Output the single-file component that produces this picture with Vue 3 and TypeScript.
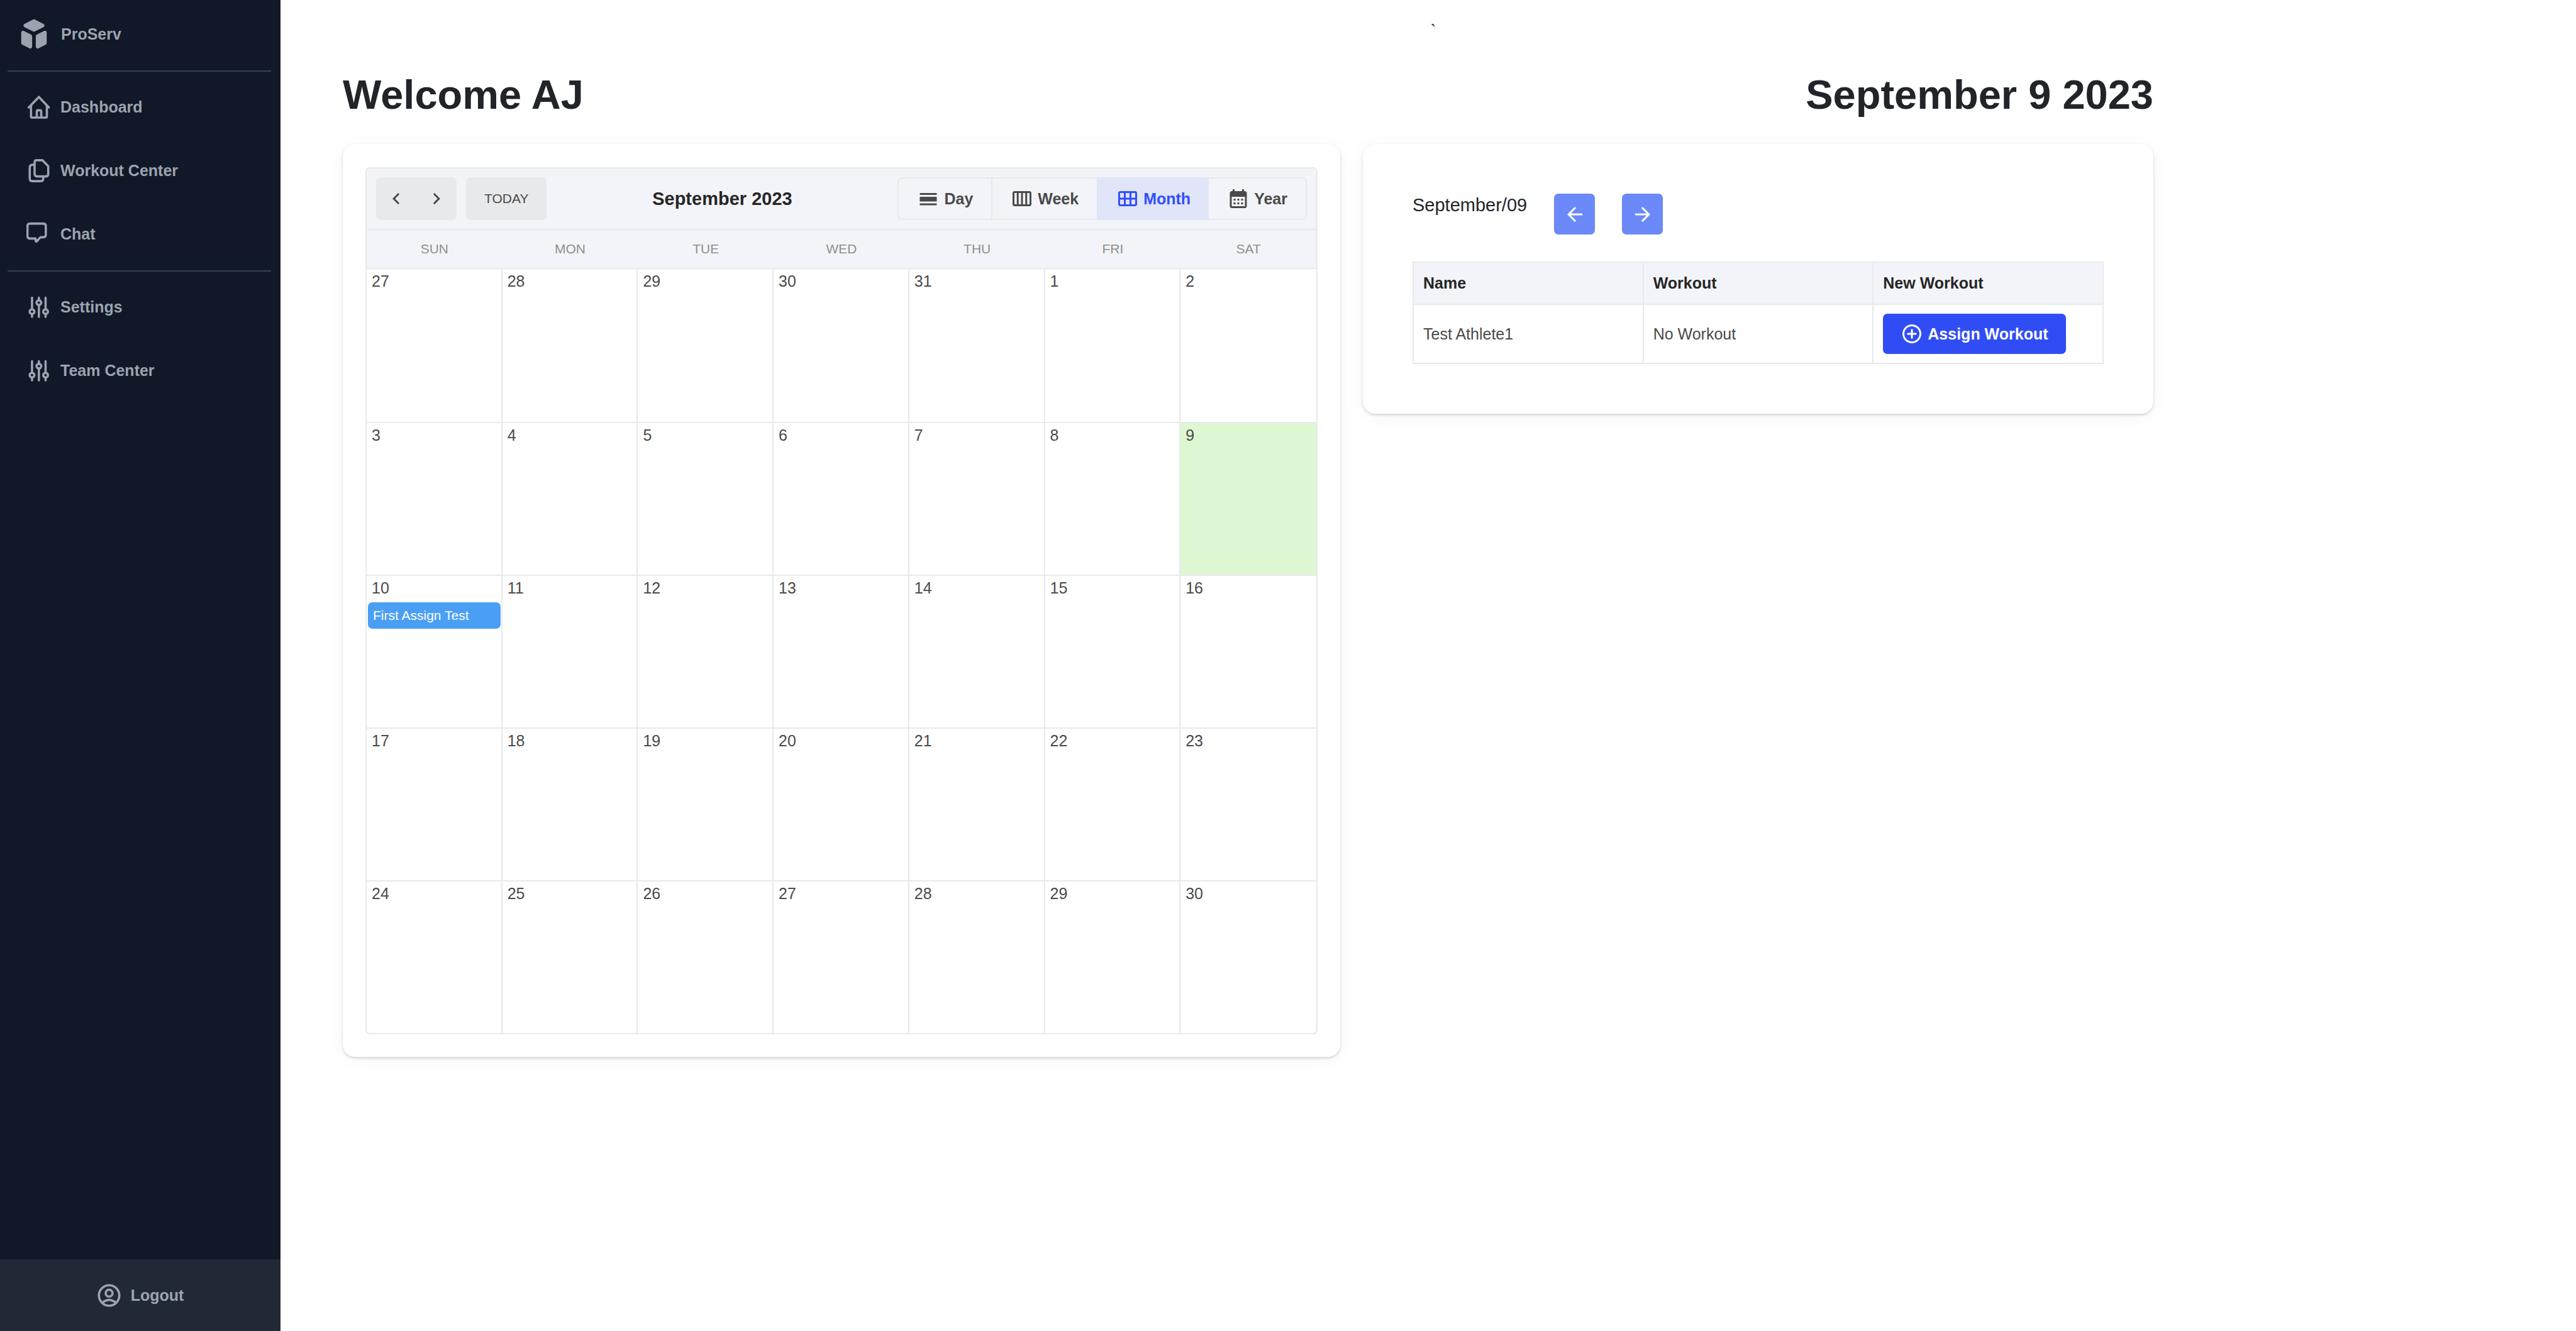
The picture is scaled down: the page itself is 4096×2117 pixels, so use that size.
<script setup lang="ts">
import { ref } from 'vue'

interface NavItem {
  label: string
  icon: 'home' | 'copy' | 'chat' | 'sliders'
}

interface ViewMode {
  label: string
  path: string
}

interface CalendarDay {
  day: number
  today?: boolean
  event?: string
}

const navGroups: NavItem[][] = [
  [
    { label: 'Dashboard', icon: 'home' },
    { label: 'Workout Center', icon: 'copy' },
    { label: 'Chat', icon: 'chat' },
  ],
  [
    { label: 'Settings', icon: 'sliders' },
    { label: 'Team Center', icon: 'sliders' },
  ],
]

const viewModes: ViewMode[] = [
  { label: 'Day', path: 'M3 17h18v2H3v-2zm0-7h18v5H3v-5zm0-4h18v2H3V6z' },
  {
    label: 'Week',
    path: 'M20 4H4c-1.1 0-2 .9-2 2v12c0 1.1.9 2 2 2h16c1.1 0 2-.9 2-2V6c0-1.1-.9-2-2-2zm-7 2h2.5v12H13V6zm-2 12H8.5V6H11v12zM4 6h2.5v12H4V6zm16 12h-2.5V6H20v12z',
  },
  {
    label: 'Month',
    path: 'M20 4H4c-1.1 0-2 .9-2 2v12c0 1.1.9 2 2 2h16c1.1 0 2-.9 2-2V6c0-1.1-.9-2-2-2zM8 11H4V6h4v5zm6 0h-4V6h4v5zm6 0h-4V6h4v5zM8 18H4v-5h4v5zm6 0h-4v-5h4v5zm6 0h-4v-5h4v5z',
  },
  {
    label: 'Year',
    path: 'M19 4h-1V2h-2v2H8V2H6v2H5c-1.11 0-1.99.9-1.99 2L3 20c0 1.1.89 2 2 2h14c1.1 0 2-.9 2-2V6c0-1.1-.9-2-2-2zm0 16H5V10h14v10zM9 14H7v-2h2v2zm4 0h-2v-2h2v2zm4 0h-2v-2h2v2zm-8 4H7v-2h2v2zm4 0h-2v-2h2v2zm4 0h-2v-2h2v2z',
  },
]

const activeView = ref('Month')
const weekdays = ['SUN', 'MON', 'TUE', 'WED', 'THU', 'FRI', 'SAT']

// Five weeks starting on Sunday, August 27
const weeks: CalendarDay[][] = Array.from({ length: 5 }, (_, w) =>
  Array.from({ length: 7 }, (_, d) => {
    const offset = w * 7 + d
    const day = offset < 5 ? 27 + offset : offset - 4
    return {
      day,
      today: day === 9,
      event: day === 10 ? 'First Assign Test' : undefined,
    }
  }),
)

const athletes = [{ name: 'Test Athlete1', workout: 'No Workout' }]
</script>

<template>
  <div class="app">
    <aside class="sidebar">
      <a class="brand" href="#">
        <svg class="brand-icon" viewBox="0 0 20 20" fill="currentColor" aria-hidden="true">
          <path d="M11 17a1 1 0 001.447.894l4-2A1 1 0 0017 15V9.236a1 1 0 00-1.447-.894l-4 2a1 1 0 00-.553.894V17zM15.211 6.276a1 1 0 000-1.788l-4.764-2.382a1 1 0 00-.894 0L4.789 4.488a1 1 0 000 1.788l4.764 2.382a1 1 0 00.894 0l4.764-2.382zM4.447 8.342A1 1 0 003 9.236V15a1 1 0 00.553.894l4 2A1 1 0 009 17v-5.764a1 1 0 00-.553-.894l-4-2z" />
        </svg>
        <span>ProServ</span>
      </a>
      <nav>
        <ul v-for="(group, g) in navGroups" :key="g" class="nav-group">
          <li v-for="item in group" :key="item.label">
            <a class="nav-link" href="#">
              <svg class="nav-icon" viewBox="0 0 48 48" fill="none" stroke="currentColor" stroke-width="4.4" stroke-linecap="round" stroke-linejoin="round" aria-hidden="true">
                <template v-if="item.icon === 'home'">
                  <path d="M4.5 24.5L24.4 4 44 24.5" />
                  <path d="M9 21v21.5q0 1.8 1.8 1.8h27.4q1.8 0 1.8-1.8V21" />
                  <path d="M20.3 43V32.5q0-2.5 2.5-2.5h3.7q2.5 0 2.5 2.5V43" />
                </template>
                <template v-else-if="item.icon === 'copy'">
                  <path d="M20 3.5h10.5q1 0 1.7.7l9.8 10.3q.7.7.7 1.7V30q0 5.2-5 5.2H21q-5 0-5-5V7.5q0-4 4-4z" />
                  <path d="M14 12.5h-2.5q-5 0-5 5v21.5q0 5.5 5 5.5h16.5q5 0 5-5.5v-3" />
                </template>
                <template v-else-if="item.icon === 'chat'">
                  <path d="M7 3.2h26q5 0 5 5V25q0 5-5 5h-5.5l-7.5 8.2q-1.7.6-2-1.2v-4.5H7q-5 0-5-5V8.2q0-5 5-5z" />
                </template>
                <template v-else>
                  <path d="M11 5.5v22.5M11 37.5v5.5M24.4 5.5v5M24.4 20v23M37.5 5.5v22.5M37.5 37.5v5.5" />
                  <circle cx="11" cy="32.8" r="4.6" />
                  <circle cx="24.4" cy="15.2" r="4.6" />
                  <circle cx="37.5" cy="32.8" r="4.6" />
                </template>
              </svg>
              <span>{{ item.label }}</span>
            </a>
          </li>
        </ul>
      </nav>
      <a class="logout" href="#">
        <svg class="nav-icon" viewBox="0 0 48 48" fill="none" stroke="currentColor" stroke-width="4.4" aria-hidden="true">
          <circle cx="24" cy="24" r="20" />
          <circle cx="24" cy="19.5" r="6.7" />
          <path d="M10.5 38Q24 27.5 37.5 38" />
        </svg>
        <span>Logout</span>
      </a>
    </aside>

    <main class="main">
      <div class="notice">`</div>
      <div class="content">
        <header class="page-head">
          <h1>Welcome AJ</h1>
          <h1>September 9 2023</h1>
        </header>

        <div class="columns">
          <section class="card calendar-card">
            <div class="calendar">
              <div class="toolbar">
                <div class="toolbar-left">
                  <div class="pager">
                    <button type="button" aria-label="Previous month">
                      <svg class="icon" viewBox="0 0 24 24" fill="currentColor"><path d="M15.41 7.41L14 6l-6 6 6 6 1.41-1.41L10.83 12z" /></svg>
                    </button>
                    <button type="button" aria-label="Next month">
                      <svg class="icon" viewBox="0 0 24 24" fill="currentColor"><path d="M10 6L8.59 7.41 13.17 12l-4.58 4.59L10 18l6-6z" /></svg>
                    </button>
                  </div>
                  <button type="button" class="today-button">TODAY</button>
                </div>
                <h2>September 2023</h2>
                <div class="views">
                  <button
                    v-for="mode in viewModes"
                    :key="mode.label"
                    type="button"
                    :class="{ active: mode.label === activeView }"
                    @click="activeView = mode.label"
                  >
                    <svg class="icon" viewBox="0 0 24 24" fill="currentColor" aria-hidden="true"><path :d="mode.path" /></svg>
                    <span>{{ mode.label }}</span>
                  </button>
                </div>
              </div>
              <table class="month">
                <thead>
                  <tr>
                    <th v-for="name in weekdays" :key="name" scope="col">{{ name }}</th>
                  </tr>
                </thead>
                <tbody>
                  <tr v-for="(week, w) in weeks" :key="w">
                    <td v-for="cell in week" :key="cell.day" :class="{ today: cell.today }">
                      <div class="date">{{ cell.day }}</div>
                      <div v-if="cell.event" class="event">{{ cell.event }}</div>
                    </td>
                  </tr>
                </tbody>
              </table>
            </div>
          </section>

          <section class="card athletes-card">
            <div class="day-picker">
              <span class="day-label">September/09</span>
              <button type="button" aria-label="Previous day">
                <svg class="icon" viewBox="0 0 24 24" fill="currentColor"><path d="M20 11H7.83l5.59-5.59L12 4l-8 8 8 8 1.41-1.41L7.83 13H20v-2z" /></svg>
              </button>
              <button type="button" aria-label="Next day">
                <svg class="icon" viewBox="0 0 24 24" fill="currentColor"><path d="M12 4l-1.41 1.41L16.17 11H4v2h12.17l-5.58 5.59L12 20l8-8z" /></svg>
              </button>
            </div>
            <table class="athletes">
              <thead>
                <tr>
                  <th scope="col">Name</th>
                  <th scope="col">Workout</th>
                  <th scope="col">New Workout</th>
                </tr>
              </thead>
              <tbody>
                <tr v-for="athlete in athletes" :key="athlete.name">
                  <td>{{ athlete.name }}</td>
                  <td>{{ athlete.workout }}</td>
                  <td>
                    <button type="button" class="assign">
                      <svg class="icon" viewBox="0 0 24 24" fill="currentColor" aria-hidden="true"><path d="M13 7h-2v4H7v2h4v4h2v-4h4v-2h-4V7zm-1-5C6.48 2 2 6.48 2 12s4.48 10 10 10 10-4.48 10-10S17.52 2 12 2zm0 18c-4.41 0-8-3.59-8-8s3.59-8 8-8 8 3.59 8 8-3.59 8-8 8z" /></svg>
                      <span>Assign Workout</span>
                    </button>
                  </td>
                </tr>
              </tbody>
            </table>
          </section>
        </div>
      </div>
    </main>
  </div>
</template>

<style>
body {
  margin: 0;
  background: #fff;
}
</style>

<style scoped>
* {
  box-sizing: border-box;
}

.app {
  display: flex;
  min-height: 100vh;
  font-family: "Liberation Sans", Arial, Helvetica, sans-serif;
  color: #212529;
}

a {
  color: inherit;
  text-decoration: none;
}

button {
  display: flex;
  align-items: center;
  justify-content: center;
  margin: 0;
  padding: 0;
  border: 0;
  background: none;
  color: inherit;
  font: inherit;
  cursor: pointer;
}

.icon {
  flex: none;
  width: 36px;
  height: 36px;
}

/* Sidebar */
.sidebar {
  display: flex;
  flex: none;
  flex-direction: column;
  width: 446px;
  background: #111827;
  color: #9ca3af;
  font-size: 25px;
  font-weight: 700;
}

.brand {
  display: flex;
  align-items: center;
  gap: 14px;
  height: 108px;
  margin-bottom: 4px;
  padding-left: 25px;
}

.brand-icon {
  width: 58px;
  height: 58px;
}

.nav-group {
  margin: 0 15px 0 12px;
  padding: 6px 0 7px;
  border-top: 2px solid #374151;
  list-style: none;
}

.nav-link {
  display: flex;
  align-items: center;
  gap: 15px;
  height: 101px;
  padding-left: 30px;
}

.nav-icon {
  flex: none;
  width: 39px;
  height: 39px;
}

.logout {
  display: flex;
  align-items: center;
  justify-content: center;
  gap: 15px;
  height: 114px;
  margin-top: auto;
  background: #212936;
}

/* Page */
.main {
  flex: 1;
  min-width: 0;
}

.notice {
  padding: 28px 0 0 16px;
  font-size: 26px;
  line-height: 40px;
  text-align: center;
}

.content {
  max-width: 3078px;
  padding: 44px 100px 44px 99px;
}

.page-head {
  display: flex;
  justify-content: space-between;
  margin-bottom: 39px;
}

h1 {
  margin: 0;
  font-size: 65px;
  line-height: 78px;
}

.columns {
  display: grid;
  grid-template-columns: 1586fr 1257fr;
  align-items: start;
  gap: 36px;
}

.card {
  border-radius: 20px;
  background: #fff;
  box-shadow: 0 2px 4px rgba(0, 0, 0, 0.16), 0 4px 32px rgba(0, 0, 0, 0.04);
}

/* Calendar */
.calendar-card {
  padding: 37px 36px 36px;
}

.calendar {
  overflow: hidden;
  border: 2px solid #e8e9ec;
  border-radius: 7px;
}

.toolbar {
  display: flex;
  align-items: center;
  justify-content: space-between;
  padding: 14px 15px;
  border-bottom: 2px solid #e8e9ec;
  background: #f3f4f9;
  color: #4a4a4a;
}

.toolbar-left {
  display: flex;
  gap: 15px;
}

.pager {
  display: flex;
  overflow: hidden;
  border-radius: 7px;
  background: #e8e9ec;
}

.pager button {
  width: 64px;
  height: 68px;
}

.today-button {
  height: 68px;
  padding: 0 29px;
  border-radius: 7px;
  background: #e8e9ec;
  font-size: 21px;
}

h2 {
  margin: 0;
  color: #262626;
  font-size: 29px;
  line-height: 36px;
}

.views {
  display: flex;
}

.views button {
  gap: 7px;
  height: 68px;
  padding: 0 29px;
  border: 2px solid #e8e9ec;
  border-right-width: 0;
  font-size: 25px;
  font-weight: 700;
}

.views button:first-child {
  border-radius: 7px 0 0 7px;
}

.views button:last-child {
  border-right-width: 2px;
  border-left-width: 0;
  border-radius: 0 7px 7px 0;
}

.views button.active {
  border-color: #e0e5f9;
  background: #e0e5f9;
  color: #304ffe;
}

table {
  width: 100%;
  border-spacing: 0;
  table-layout: fixed;
}

.month th {
  height: 62px;
  padding: 0;
  border-bottom: 2px solid #e8e9ec;
  background: #f3f4f9;
  color: #8f8f8f;
  font-size: 21px;
  font-weight: 400;
}

.month td {
  height: 243px;
  padding: 0;
  border: 0 solid #e8e9ec;
  border-width: 0 2px 2px 0;
  vertical-align: top;
}

.month td:last-child {
  border-right-width: 0;
}

.month tr:first-child td {
  height: 245px;
}

.month tr:last-child td {
  height: 241px;
  border-bottom-width: 0;
}

.month td.today {
  background: #def7d3;
  background-clip: padding-box;
}

.date {
  padding: 0 8px;
  color: #4a4a4a;
  font-size: 25px;
  line-height: 38px;
}

.event {
  margin: 4px 1px 0 2px;
  padding: 0 8px;
  border-radius: 7px;
  background: #4a9ff5;
  color: #fff;
  font-size: 21px;
  line-height: 42px;
}

/* Athletes */
.athletes-card {
  padding: 79px;
}

.day-picker {
  display: flex;
  align-items: flex-start;
  gap: 43px;
  margin-bottom: 43px;
}

.day-label {
  font-size: 29px;
  line-height: 36px;
}

.day-picker button {
  width: 65px;
  height: 65px;
  border-radius: 7px;
  background: #6b89f8;
  color: #fff;
}

.athletes {
  border-collapse: collapse;
}

.athletes th,
.athletes td {
  padding: 14px 15px;
  border: 2px solid #e8e9ec;
  text-align: left;
}

.athletes th {
  background: #f3f4f9;
  color: #262626;
  font-size: 25px;
  line-height: 37px;
}

.athletes td {
  color: #4a4a4a;
  font-size: 25px;
}

.assign {
  gap: 7px;
  height: 64px;
  padding: 0 28px;
  border-radius: 7px;
  background: #304df5;
  color: #fff;
  font-weight: 700;
}
</style>
